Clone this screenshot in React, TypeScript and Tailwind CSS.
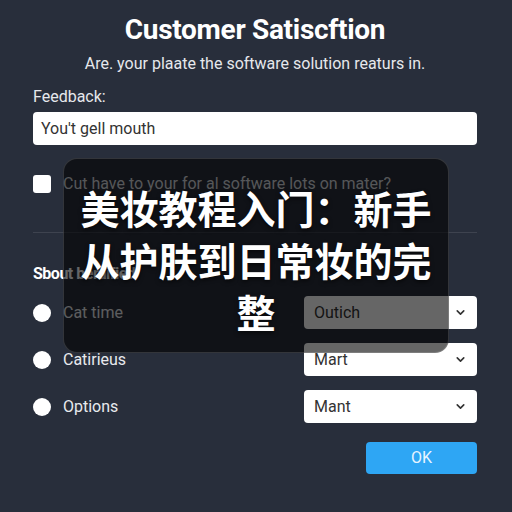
import React from "react";
import { ChevronDown } from "lucide-react";

function Select({ value }: { value: string }) {
  return (
    <div className="w-[173px] h-[33px] bg-white rounded-[4px] flex items-center justify-between pl-[10px] pr-[10px]">
      <span className="text-[16px] text-[#333] leading-none">{value}</span>
      <ChevronDown size={13} strokeWidth={3} className="text-[#333]" />
    </div>
  );
}

function RadioRow({ label, value }: { label: string; value: string }) {
  return (
    <div className="flex items-center justify-between h-[33px]">
      <div className="flex items-center gap-[12px]">
        <div className="w-[18px] h-[18px] rounded-full bg-white" />
        <span className="text-[16px] text-[#e8eaee] leading-none">{label}</span>
      </div>
      <Select value={value} />
    </div>
  );
}

export default function App() {
  return (
    <div
      className="relative w-[512px] h-[512px] overflow-hidden bg-[#282e3b] text-white"
      style={{ fontFamily: "Roboto, 'Liberation Sans', sans-serif" }}
    >
      <div className="flex flex-col pl-[33px] pr-[35px] pt-[13px]">
        <h1 className="text-center text-[28px] leading-[34px] font-bold tracking-[-0.3px] text-white">
          Customer Satiscftion
        </h1>
        <p className="text-center text-[16px] leading-[20px] mt-[7px] text-[#e6e8ec]">
          Are. your plaate the software solution reaturs in.
        </p>
        <p className="text-[16px] leading-[20px] mt-[13px] text-[#e6e8ec]">Feedback:</p>
        <div className="mt-[5px] h-[33px] bg-white rounded-[4px] flex items-center pl-[8px]">
          <span className="text-[16px] text-[#333] leading-none">You't gell mouth</span>
        </div>
        <div className="flex items-center gap-[12px] mt-[30px] h-[18px]">
          <div className="w-[18px] h-[18px] rounded-[3px] bg-white" />
          <span className="text-[16px] text-[#d6d9de] leading-none">
            Cut have to your for al software lots on mater?
          </span>
        </div>
        <div className="mt-[39px] h-px bg-white/10" />
        <h2 className="mt-[31px] text-[16px] leading-[20px] font-bold text-white tracking-[-0.5px]">
          Sbout beraified
        </h2>
        <div className="mt-[12px] flex flex-col gap-[14px]">
          <RadioRow label="Cat time" value="Outich" />
          <RadioRow label="Catirieus" value="Mart" />
          <RadioRow label="Options" value="Mant" />
        </div>
        <div className="flex justify-end mt-[19px]">
          <div className="w-[111px] h-[32px] rounded-[4px] bg-[#2ea6f4] flex items-center justify-center">
            <span className="text-[16px] text-[#e8f4ff] leading-none">OK</span>
          </div>
        </div>
      </div>

      <div
        className="absolute left-[63px] top-[158px] w-[386px] h-[195px] rounded-[14px] bg-black/60 border border-white/15 flex flex-col items-center pt-[22px]"
      >
        <p
          className="text-center text-[39px] leading-[52px] font-bold text-white w-[360px]"
          style={{
            fontFamily: "'Noto Sans CJK SC', sans-serif",
            textShadow: "0 2px 4px rgba(0,0,0,0.6)",
          }}
        >
          美妆教程入门：新手从护肤到日常妆的完整
        </p>
      </div>
    </div>
  );
}
